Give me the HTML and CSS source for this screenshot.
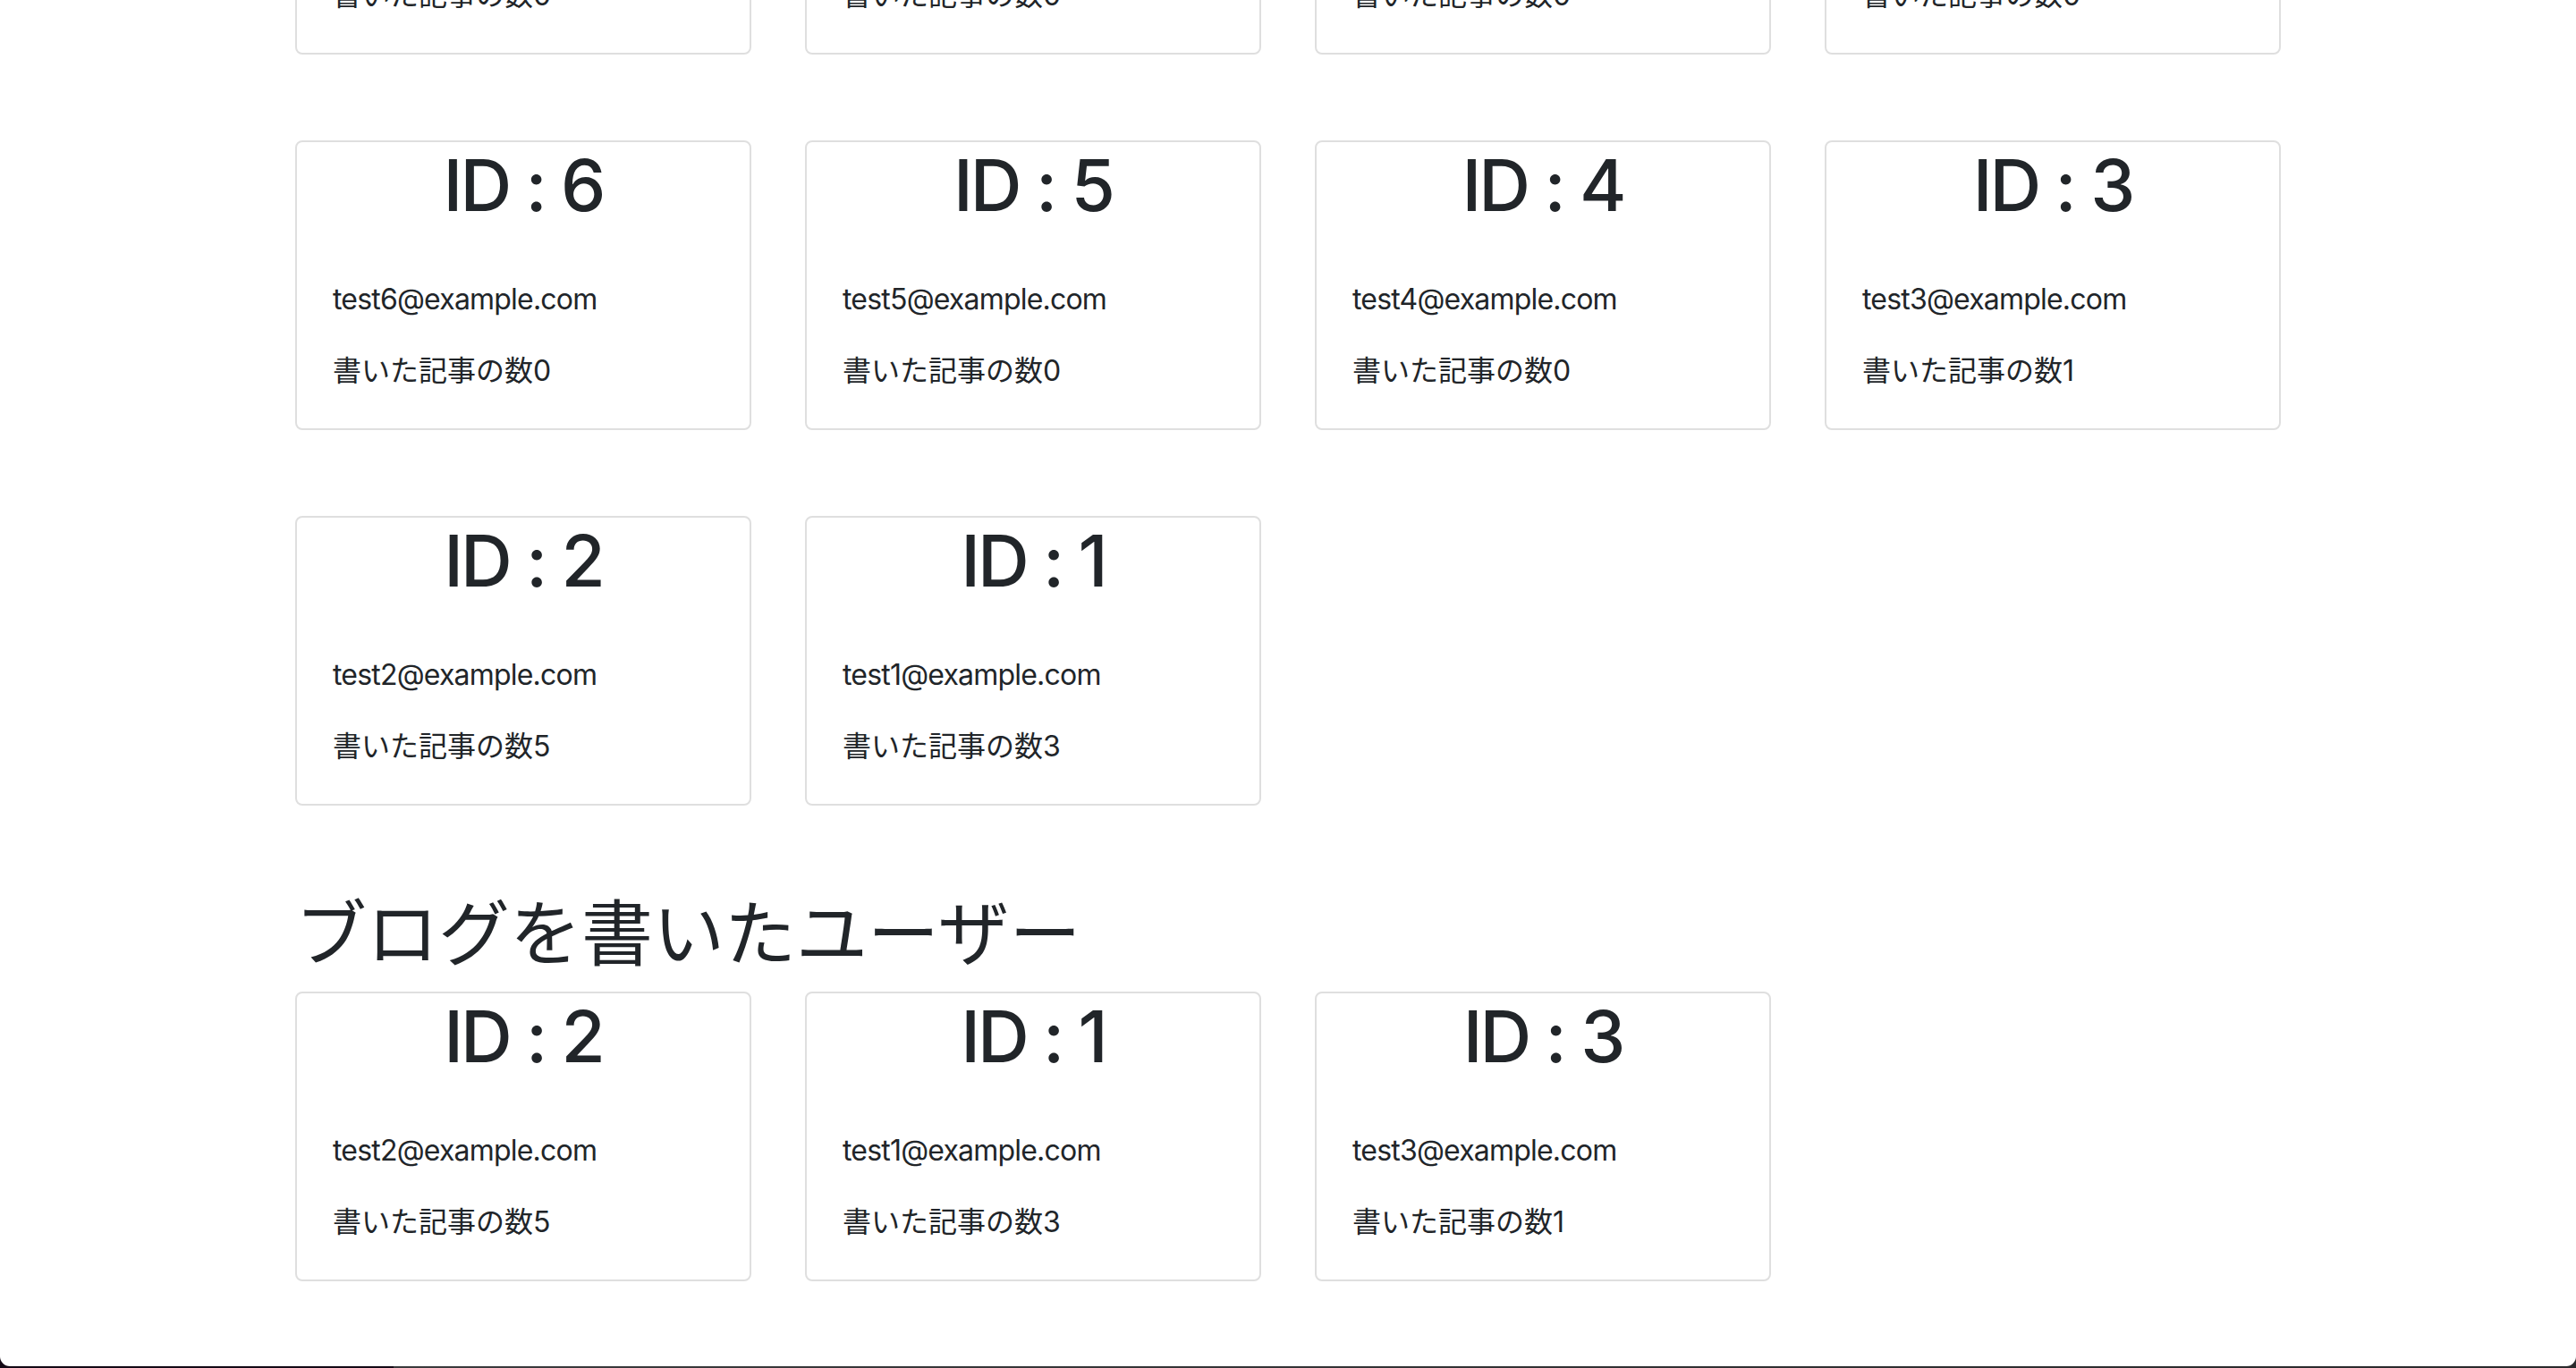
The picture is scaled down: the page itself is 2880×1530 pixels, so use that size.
FILE: index.html
```html
<!DOCTYPE html>
<html lang="ja">
<head>
<meta charset="utf-8">
<title>Users</title>
<link rel="stylesheet" href="styles.css">
</head>
<body>
<div class="window">
  <div class="container">
    <div class="row">
      <div class="col"><div class="card"><h1 class="card-id">ID : 10</h1><div class="card-body"><p class="email">test10@example.com</p><p>書いた記事の数0</p></div></div></div>
      <div class="col"><div class="card"><h1 class="card-id">ID : 9</h1><div class="card-body"><p class="email">test9@example.com</p><p>書いた記事の数0</p></div></div></div>
      <div class="col"><div class="card"><h1 class="card-id">ID : 8</h1><div class="card-body"><p class="email">test8@example.com</p><p>書いた記事の数0</p></div></div></div>
      <div class="col"><div class="card"><h1 class="card-id">ID : 7</h1><div class="card-body"><p class="email">test7@example.com</p><p>書いた記事の数0</p></div></div></div>
      <div class="col"><div class="card"><h1 class="card-id">ID : 6</h1><div class="card-body"><p class="email">test6@example.com</p><p>書いた記事の数0</p></div></div></div>
      <div class="col"><div class="card"><h1 class="card-id">ID : 5</h1><div class="card-body"><p class="email">test5@example.com</p><p>書いた記事の数0</p></div></div></div>
      <div class="col"><div class="card"><h1 class="card-id">ID : 4</h1><div class="card-body"><p class="email">test4@example.com</p><p>書いた記事の数0</p></div></div></div>
      <div class="col"><div class="card"><h1 class="card-id">ID : 3</h1><div class="card-body"><p class="email">test3@example.com</p><p>書いた記事の数1</p></div></div></div>
      <div class="col"><div class="card"><h1 class="card-id">ID : 2</h1><div class="card-body"><p class="email">test2@example.com</p><p>書いた記事の数5</p></div></div></div>
      <div class="col"><div class="card"><h1 class="card-id">ID : 1</h1><div class="card-body"><p class="email">test1@example.com</p><p>書いた記事の数3</p></div></div></div>
    </div>
    <h1 class="section-title">ブログを書いたユーザー</h1>
    <div class="row">
      <div class="col"><div class="card"><h1 class="card-id">ID : 2</h1><div class="card-body"><p class="email">test2@example.com</p><p>書いた記事の数5</p></div></div></div>
      <div class="col"><div class="card"><h1 class="card-id">ID : 1</h1><div class="card-body"><p class="email">test1@example.com</p><p>書いた記事の数3</p></div></div></div>
      <div class="col"><div class="card"><h1 class="card-id">ID : 3</h1><div class="card-body"><p class="email">test3@example.com</p><p>書いた記事の数1</p></div></div></div>
    </div>
  </div>
</div>
</body>
</html>
```
FILE: styles.css
```css
* { box-sizing: border-box; }
html, body {
  margin: 0;
  padding: 0;
  height: 1530px;
  overflow: hidden;
}
body {
  background: linear-gradient(to right, #140a16 0, #140a16 440px, #3b3b3d 440px, #2a2a2c 100%);
  font-family: Inter, "Noto Sans CJK JP", "Noto Sans", sans-serif;
  color: #212529;
  font-size: 32px;
  line-height: 1.5;
}
.window {
  height: 1528px;
  background: #fff;
  border-radius: 0 0 11px 11px;
  overflow: hidden;
}
.container {
  max-width: 2280px;
  margin: -263px auto 0;
  padding: 0 30px;
}
.row {
  display: flex;
  flex-wrap: wrap;
  margin: 0 -30px;
}
.col {
  flex: 0 0 25%;
  max-width: 25%;
  padding: 0 30px;
  margin-bottom: 96px;
}
.card {
  border: 2px solid #dfdfdf;
  border-radius: 8px;
  background: #fff;
}
.card-id {
  margin: 0 0 16px;
  font-size: 80px;
  line-height: 1.2;
  font-weight: 500;
  text-align: center;
  letter-spacing: -3px;
}
.card-body {
  padding: 40px;
}
.card-body p {
  margin: 0 0 32px;
}
.card-body p:last-child {
  margin-bottom: 0;
}
.card-body .email {
  letter-spacing: -0.8px;
}
.section-title {
  margin: -7px 0 23px;
  font-family: "Noto Sans CJK JP", sans-serif;
  font-size: 80px;
  line-height: 1.2;
  font-weight: 400;
}
```
